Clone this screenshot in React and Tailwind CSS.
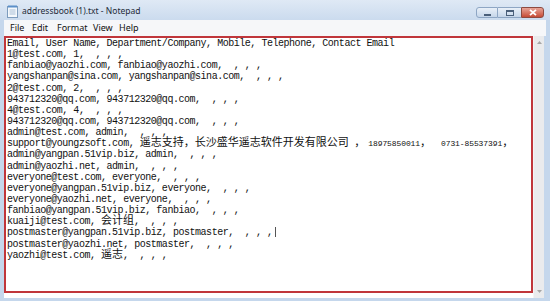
import React from "react";

const mono = { fontFamily: '"Liberation Mono", "Noto Sans CJK SC", monospace' };
const cjk =
  "inline-block align-top h-[11px] font-['Noto_Sans_CJK_SC',sans-serif] text-[11px] leading-[7px] tracking-normal";
const digits = "inline-block align-top h-[11px] text-[8px] leading-[11px] tracking-[-0.1px]";

const rows = [
  "Email, User Name, Department/Company, Mobile, Telephone, Contact Email",
  "1@test.com, 1,  , , ,",
  "fanbiao@yaozhi.com, fanbiao@yaozhi.com,  , , ,",
  "yangshanpan@sina.com, yangshanpan@sina.com,  , , ,",
  "2@test.com, 2,  , , ,",
  "943712320@qq.com, 943712320@qq.com,  , , ,",
  "4@test.com, 4,  , , ,",
  "943712320@qq.com, 943712320@qq.com,  , , ,",
  "admin@test.com, admin,  , , ,",
  "SUPPORT",
  "admin@yangpan.51vip.biz, admin,  , , ,",
  "admin@yaozhi.net, admin,  , , ,",
  "everyone@test.com, everyone,  , , ,",
  "everyone@yangpan.51vip.biz, everyone,  , , ,",
  "everyone@yaozhi.net, everyone,  , , ,",
  "fanbiao@yangpan.51vip.biz, fanbiao,  , , ,",
  "KUAIJI",
  "CURSOR",
  "postmaster@yaozhi.net, postmaster,  , , ,",
  "YAOZHI",
];

function Row({ text }) {
  let body;
  if (text === "SUPPORT") {
    body = (
      <>
        support@youngzsoft.com,{" "}
        <span className={cjk}>遥志支持，长沙盛华遥志软件开发有限公司</span>{" "}
        <span className={cjk}>，</span>
        <span className={`${digits} ml-[3px]`}>18975850011</span>
        <span className={cjk}>，</span>
        <span className={`${digits} ml-[10px]`}>0731-85537391</span>
        <span className={cjk}>，</span>
      </>
    );
  } else if (text === "KUAIJI") {
    body = (
      <>
        kuaiji@test.com, <span className={cjk}>会计组</span>,  , , ,
      </>
    );
  } else if (text === "YAOZHI") {
    body = (
      <>
        yaozhi@test.com, <span className={cjk}>遥志</span>,  , , ,
      </>
    );
  } else if (text === "CURSOR") {
    body = (
      <>
        postmaster@yangpan.51vip.biz, postmaster,  , , ,
        <span className="inline-block w-[1px] h-[10px] bg-[#555] align-[-2px] ml-[2px]" />
      </>
    );
  } else {
    body = text;
  }
  return (
    <div className="h-[11.15px] leading-[11.15px] whitespace-pre overflow-visible">{body}</div>
  );
}

function NotepadIcon() {
  return (
    <svg width="11" height="13" viewBox="0 0 11 13">
      <rect x="0.5" y="1.5" width="10" height="11" fill="#f4f8fc" stroke="#7d9cbd" />
      <rect x="1" y="0.5" width="9" height="2" fill="#5b8fc9" />
      <line x1="2.5" y1="5" x2="8.5" y2="5" stroke="#a9bfd6" />
      <line x1="2.5" y1="7" x2="8.5" y2="7" stroke="#a9bfd6" />
      <line x1="2.5" y1="9" x2="8.5" y2="9" stroke="#a9bfd6" />
    </svg>
  );
}

function CaptionButtons() {
  return (
    <div className="flex mt-[7px] mr-[6px] h-[11px]">
      <div className="w-[22px] h-full border border-[#8ea6c4] rounded-l-[3px] bg-gradient-to-b from-[#e9f0f8] to-[#c6d6ea] flex items-center justify-center">
        <div className="w-[7px] h-[2px] bg-[#4a5f7a] mt-[4px]" />
      </div>
      <div className="w-[23px] h-full border-y border-[#8ea6c4] bg-gradient-to-b from-[#e9f0f8] to-[#c6d6ea] flex items-center justify-center">
        <div className="w-[8px] h-[6px] border border-[#4a5f7a] border-t-2" />
      </div>
      <div className="w-[23px] h-full border border-[#8d4a40] rounded-r-[3px] bg-gradient-to-b from-[#e7a397] to-[#c54a35] flex items-center justify-center">
        <svg width="8" height="7" viewBox="0 0 8 7">
          <path d="M1 0.8 L7 6.2 M7 0.8 L1 6.2" stroke="#fff" strokeWidth="1.8" />
        </svg>
      </div>
    </div>
  );
}

function Arrow({ up }) {
  return (
    <svg width="5" height="3" viewBox="0 0 5 3">
      <path d={up ? "M0 3 L2.5 0 L5 3 Z" : "M0 0 L2.5 3 L5 0 Z"} fill="#a6a6a6" />
    </svg>
  );
}

export default function App() {
  return (
    <div className="w-[550px] h-[301px] bg-[#c5d7ec] flex flex-col overflow-hidden">
      {/* title bar */}
      <div className="h-[20px] flex bg-gradient-to-b from-[#dfe9f5] to-[#cbdbee]">
        <div className="flex items-center pl-[7px] gap-[4px] pt-[2px]">
          <NotepadIcon />
          <span className="font-['Noto_Sans',sans-serif] text-[8.5px] text-[#1e2a38] leading-none">
            addressbook (1).txt - Notepad
          </span>
        </div>
        <div className="flex-1" />
        <CaptionButtons />
      </div>

      {/* menu bar */}
      <div className="h-[16px] mx-[4px] bg-[#f6f7f9] flex items-center pl-[6px] font-['Noto_Sans',sans-serif] text-[9px] text-[#111]">
        <span className="w-[22px]">File</span>
        <span className="w-[25px]">Edit</span>
        <span className="w-[36px]">Format</span>
        <span className="w-[26px]">View</span>
        <span>Help</span>
      </div>

      {/* edit area with scrollbar */}
      <div className="flex-1 flex ml-[4px] mr-[6px] mb-[3px]">
        <div className="flex-1 flex flex-col bg-white">
          <div
            className="flex-1 border-2 border-[#c0363b] text-[10px] tracking-[-0.47px] text-[#111] pl-[1px] pt-0"
            style={mono}
          >
            {rows.map((r, i) => (
              <Row key={i} text={r} />
            ))}
          </div>
          <div className="h-[5px]" />
        </div>
        <div className="w-[11px] bg-[#eaebed] flex flex-col items-center justify-between py-[5px] border-l border-[#f4f4f4]">
          <Arrow up />
          <Arrow />
        </div>
      </div>
    </div>
  );
}
